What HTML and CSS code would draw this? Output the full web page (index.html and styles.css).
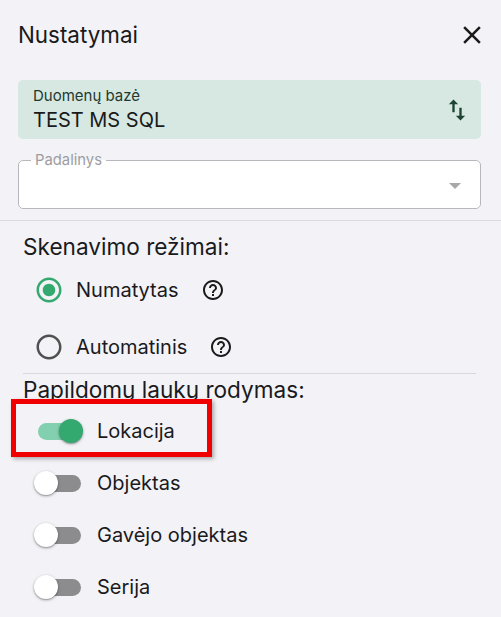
FILE: index.html
```html
<!DOCTYPE html>
<html lang="lt">
<head>
<meta charset="utf-8">
<title>Nustatymai</title>
<link rel="stylesheet" href="styles.css">
</head>
<body>
<div class="panel">
  <header class="header">
    <h1 class="title">Nustatymai</h1>
    <button class="close" aria-label="Uždaryti">
      <svg viewBox="0 0 24 24" class="close-icon"><path d="M19 6.41L17.59 5 12 10.59 6.41 5 5 6.41 10.59 12 5 17.59 6.41 19 12 13.41 17.59 19 19 17.59 13.41 12z"/></svg>
    </button>
  </header>

  <div class="fields">
    <div class="db-box">
      <div class="db-text">
        <div class="db-label">Duomenų bazė</div>
        <div class="db-value">TEST MS SQL</div>
      </div>
      <svg viewBox="0 0 24 24" class="swap-icon"><path d="M16 17.01V10h-2v7.01h-3L15 21l4-3.99h-3zM9 3L5 6.99h3V14h2V6.99h3L9 3z"/></svg>
    </div>

    <fieldset class="select">
      <legend class="select-label">Padalinys</legend>
      <div class="select-body"><span class="caret"></span></div>
    </fieldset>
  </div>

  <hr class="divider-full">

  <section class="section">
    <h2 class="section-title">Skenavimo režimai:</h2>
    <div class="radio-list">
      <div class="radio-row">
        <svg viewBox="0 0 24 24" class="radio radio-on"><path d="M12 7c-2.76 0-5 2.24-5 5s2.24 5 5 5 5-2.24 5-5-2.24-5-5-5zm0-5C6.48 2 2 6.48 2 12s4.48 10 10 10 10-4.48 10-10S17.52 2 12 2zm0 18c-4.42 0-8-3.58-8-8s3.58-8 8-8 8 3.58 8 8-3.58 8-8 8z"/></svg>
        <span class="row-label">Numatytas</span>
        <svg viewBox="0 0 24 24" class="help"><path d="M11 18h2v-2h-2v2zm1-16C6.48 2 2 6.48 2 12s4.48 10 10 10 10-4.48 10-10S17.52 2 12 2zm0 18c-4.41 0-8-3.590-8-8s3.59-8 8-8 8 3.59 8 8-3.59 8-8 8zm0-14c-2.21 0-4 1.79-4 4h2c0-1.1.9-2 2-2s2 .9 2 2c0 2-3 1.75-3 5h2c0-2.25 3-2.5 3-5 0-2.21-1.79-4-4-4z"/></svg>
      </div>
      <div class="radio-row">
        <svg viewBox="0 0 24 24" class="radio radio-off"><path d="M12 2C6.48 2 2 6.48 2 12s4.48 10 10 10 10-4.48 10-10S17.52 2 12 2zm0 18c-4.42 0-8-3.58-8-8s3.58-8 8-8 8 3.58 8 8-3.58 8-8 8z"/></svg>
        <span class="row-label">Automatinis</span>
        <svg viewBox="0 0 24 24" class="help"><path d="M11 18h2v-2h-2v2zm1-16C6.48 2 2 6.48 2 12s4.48 10 10 10 10-4.48 10-10S17.52 2 12 2zm0 18c-4.41 0-8-3.59-8-8s3.59-8 8-8 8 3.59 8 8-3.59 8-8 8zm0-14c-2.21 0-4 1.79-4 4h2c0-1.1.9-2 2-2s2 .9 2 2c0 2-3 1.75-3 5h2c0-2.25 3-2.5 3-5 0-2.21-1.79-4-4-4z"/></svg>
      </div>
    </div>

    <hr class="divider">

    <h2 class="section-title section-title-2">Papildomų laukų rodymas:</h2>
    <div class="switch-list">
      <div class="switch-row">
        <span class="switch switch-on"><span class="track"></span><span class="thumb"></span></span>
        <span class="row-label">Lokacija</span>
        <span class="highlight-frame"></span>
      </div>
      <div class="switch-row">
        <span class="switch"><span class="track"></span><span class="thumb"></span></span>
        <span class="row-label">Objektas</span>
      </div>
      <div class="switch-row">
        <span class="switch"><span class="track"></span><span class="thumb"></span></span>
        <span class="row-label">Gavėjo objektas</span>
      </div>
      <div class="switch-row">
        <span class="switch"><span class="track"></span><span class="thumb"></span></span>
        <span class="row-label">Serija</span>
      </div>
    </div>
  </section>
</div>
</body>
</html>
```
FILE: styles.css
```css
* { box-sizing: border-box; }

html, body {
  margin: 0;
  padding: 0;
  background: #f2f2f7;
}

body {
  font-family: Inter, "Noto Sans", sans-serif;
  color: #1c1c1e;
  overflow: hidden;
}

.panel {
  width: 501px;
  height: 617px;
}

/* Header */
.header {
  height: 70px;
  display: flex;
  align-items: center;
  justify-content: space-between;
  padding: 0 14px 0 18px;
}

.title {
  margin: 0;
  font-size: 22.4px;
  line-height: 28px;
  font-weight: 400;
  color: #1a1a1c;
}

.close {
  border: 0;
  background: none;
  padding: 0;
  width: 30px;
  height: 30px;
  display: flex;
}

.close-icon {
  width: 30px;
  height: 30px;
  fill: #1a1a1a;
}

/* Fields */
.fields {
  padding: 10px 20px 0 18px;
}

.db-box {
  height: 59px;
  background: #d6e8e1;
  border-radius: 5px;
  display: flex;
  align-items: center;
  justify-content: space-between;
  padding: 0 10px 0 15px;
}

.db-text {
  display: flex;
  flex-direction: column;
}

.db-label {
  font-size: 15px;
  line-height: 18px;
  color: #23392f;
}

.db-value {
  font-size: 20px;
  line-height: 24px;
  margin-top: 3px;
  color: #1a1a1a;
}

.swap-icon {
  width: 28px;
  height: 28px;
  fill: #1d4331;
}

.select {
  margin: 12px 0 0;
  padding: 0 12px;
  border: 1px solid #b8b8bc;
  border-radius: 5px;
  background: #ffffff;
  min-width: 0;
}

.select-label {
  padding: 0 4px;
  font-size: 14.8px;
  line-height: 18px;
  color: #9d9da1;
}

.select-body {
  height: 39px;
  display: flex;
  justify-content: flex-end;
  align-items: flex-start;
  padding-top: 14px;
  padding-right: 7px;
}

.caret {
  width: 0;
  height: 0;
  border-left: 6px solid transparent;
  border-right: 6px solid transparent;
  border-top: 6px solid #a8a8ab;
}

/* Dividers */
.divider-full {
  margin: 11px 0 0;
  border: 0;
  border-top: 1px solid #dbdbdf;
  height: 0;
}

.section {
  padding: 0 25px 0 23px;
}

.section-title {
  margin: 12px 0 0;
  font-size: 22.6px;
  line-height: 28px;
  font-weight: 400;
  color: #1a1a1c;
}

.section-title-2 {
  margin-top: 2px;
}

.divider {
  margin: 1px 0 0;
  border: 0;
  border-top: 1px solid #d8d8dc;
  height: 0;
}

/* Radios */
.radio-list {
  margin-top: 4px;
  display: flex;
  flex-direction: column;
  gap: 7px;
}

.radio-row {
  height: 50px;
  display: flex;
  align-items: center;
  padding-left: 11px;
}

.radio {
  width: 30px;
  height: 30px;
  flex: none;
}

.radio-on { fill: #34a96f; }
.radio-off { fill: #505050; }

.row-label {
  font-size: 20px;
  line-height: 24px;
  color: #1a1a1c;
  margin-left: 12px;
}

.help {
  width: 24px;
  height: 24px;
  margin-left: 22px;
  fill: #1a1a1a;
}

/* Switches */
.switch-list {
  margin-top: 1px;
  display: flex;
  flex-direction: column;
}

.switch-row {
  position: relative;
  height: 52px;
  display: flex;
  align-items: center;
  padding-left: 11px;
}

.switch {
  position: relative;
  width: 51px;
  height: 24px;
  flex: none;
}

.track {
  position: absolute;
  left: 4px;
  top: 3.5px;
  width: 43px;
  height: 17px;
  border-radius: 9px;
  background: #8c8c8e;
}

.thumb {
  position: absolute;
  left: 0;
  top: 0;
  width: 24px;
  height: 24px;
  border-radius: 50%;
  background: #ffffff;
  box-shadow: 0 1px 3px rgba(0, 0, 0, 0.35), 0 1px 1px rgba(0, 0, 0, 0.14);
}

.switch-on .track {
  background: #82d0af;
}

.switch-on .thumb {
  left: 25px;
  background: #34a96f;
}

.highlight-frame {
  position: absolute;
  left: -12px;
  top: -6px;
  width: 201px;
  height: 58px;
  border: 5px solid #f00000;
  box-shadow: 2px 2px 4px rgba(0, 0, 0, 0.3);
  pointer-events: none;
}
```
